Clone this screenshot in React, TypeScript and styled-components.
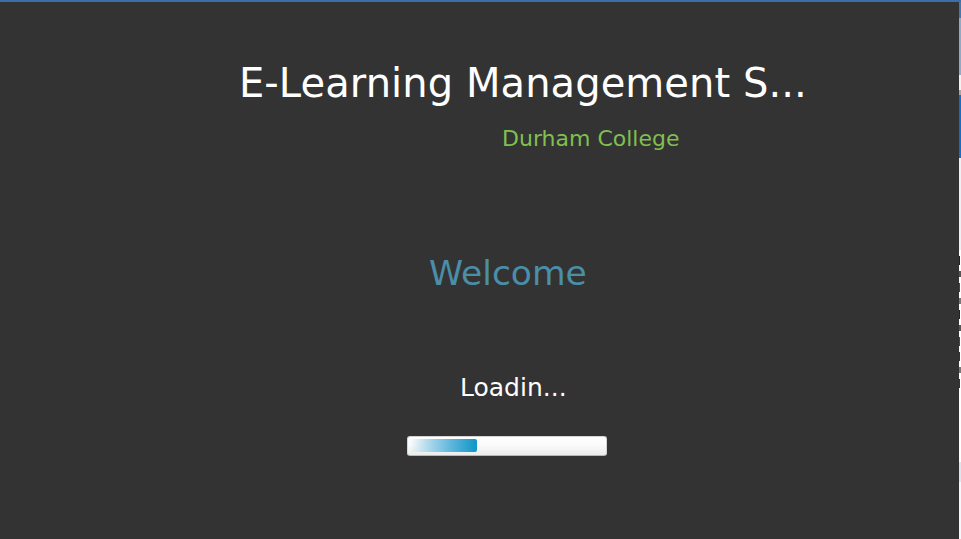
import React from "react";
import styled, { createGlobalStyle } from "styled-components";

const Global = createGlobalStyle`
  html, body { margin: 0; padding: 0; background: #333333; }
  body { font-family: "DejaVu Sans", "Liberation Sans", sans-serif; }
  * { box-sizing: border-box; }
`;

const Page = styled.div`
  width: 961px;
  height: 539px;
  display: flex;
  flex-direction: column;
  overflow: hidden;
  background: #333333;
`;

const TopLine = styled.div`
  height: 2px;
  background: #3b6fa9;
  flex: none;
`;

const Body = styled.div`
  flex: 1;
  display: flex;
  min-height: 0;
`;

const Splash = styled.main`
  width: 959px;
  flex: none;
  display: flex;
  flex-direction: column;
  background: #333333;
`;

const Row = styled.div<{ $left: number; $top: number }>`
  padding-left: ${(p) => p.$left}px;
  margin-top: ${(p) => p.$top}px;
  display: flex;
`;

const Title = styled.h1`
  margin: 0;
  font-family: "DejaVu Sans", sans-serif;
  font-weight: normal;
  font-size: 40px;
  line-height: 46px;
  letter-spacing: 0.08px;
  color: #ffffff;
  white-space: nowrap;
`;

const Subtitle = styled.div`
  font-size: 22px;
  line-height: 26px;
  color: #7fc04f;
  white-space: nowrap;
`;

const Welcome = styled.div`
  font-size: 34.5px;
  line-height: 40px;
  color: #4b8ea8;
  white-space: nowrap;
`;

const Loading = styled.div`
  font-size: 25px;
  line-height: 30px;
  color: #ffffff;
  white-space: nowrap;
`;

const Bar = styled.div`
  width: 200px;
  height: 20px;
  border-radius: 3px;
  border: 1px solid #d4d4d4;
  border-bottom-color: #b8b8b8;
  background: linear-gradient(#ffffff 0%, #fafafa 45%, #ececec 100%);
  padding: 2px 0 0 2px;
  display: flex;
  align-items: flex-start;
`;

const Chunk = styled.div`
  height: 13px;
  border-radius: 2px;
  background: linear-gradient(90deg, rgba(255,255,255,0) 0%, #a8d6ea 30%, #55b3da 65%, #0f96c8 100%);
`;

const Strip = styled.aside`
  flex: 1;
  display: flex;
  flex-direction: column;
  overflow: hidden;
`;

const Band = styled.div<{ $h: number; $c: string }>`
  height: ${(p) => p.$h}px;
  background: ${(p) => p.$c};
  flex: none;
`;

const Fragments = styled.div`
  background: #ffffff;
  height: 212px;
  flex: none;
  padding-top: 6px;
  display: flex;
  flex-direction: column;
  gap: 6px;
`;

const Mark = styled.div<{ $w: number; $h: number; $c: string }>`
  width: ${(p) => p.$w}px;
  height: ${(p) => p.$h}px;
  background: ${(p) => p.$c};
  flex: none;
`;

export default function App() {
  const progress = 34;
  const marks = [
    { w: 1, h: 9, c: "#222" },
    { w: 2, h: 6, c: "#555" },
    { w: 1, h: 9, c: "#444" },
    { w: 2, h: 6, c: "#777" },
    { w: 1, h: 9, c: "#222" },
    { w: 2, h: 6, c: "#555" },
    { w: 1, h: 9, c: "#444" },
    { w: 1, h: 9, c: "#333" },
    { w: 2, h: 6, c: "#777" },
    { w: 1, h: 9, c: "#333" },
  ];
  return (
    <>
      <Global />
      <Page>
        <TopLine />
        <Body>
          <Splash>
            <Row $left={239} $top={58}>
              <Title>E-Learning Management S...</Title>
            </Row>
            <Row $left={502} $top={20}>
              <Subtitle>Durham College</Subtitle>
            </Row>
            <Row $left={429} $top={101}>
              <Welcome>Welcome</Welcome>
            </Row>
            <Row $left={460} $top={80}>
              <Loading>Loadin...</Loading>
            </Row>
            <Row $left={407} $top={33}>
              <Bar>
                <Chunk style={{ width: `${progress}%` }} />
              </Bar>
            </Row>
          </Splash>
          <Strip>
            <Band $h={16} $c="#3d79b6" />
            <Band $h={57} $c="#8fa9c9" />
            <Band $h={15} $c="#f2f2f2" />
            <Band $h={5} $c="#a5a5a5" />
            <Band $h={63} $c="#0b6fd4" />
            <Band $h={92} $c="#eef0f4" />
            <Fragments>
              {marks.map((m, i) => (
                <Mark key={i} $w={m.w} $h={m.h} $c={m.c} />
              ))}
            </Fragments>
            <Band $h={20} $c="#dde5ee" />
            <Band $h={60} $c="#f4f7fb" />
          </Strip>
        </Body>
      </Page>
    </>
  );
}
